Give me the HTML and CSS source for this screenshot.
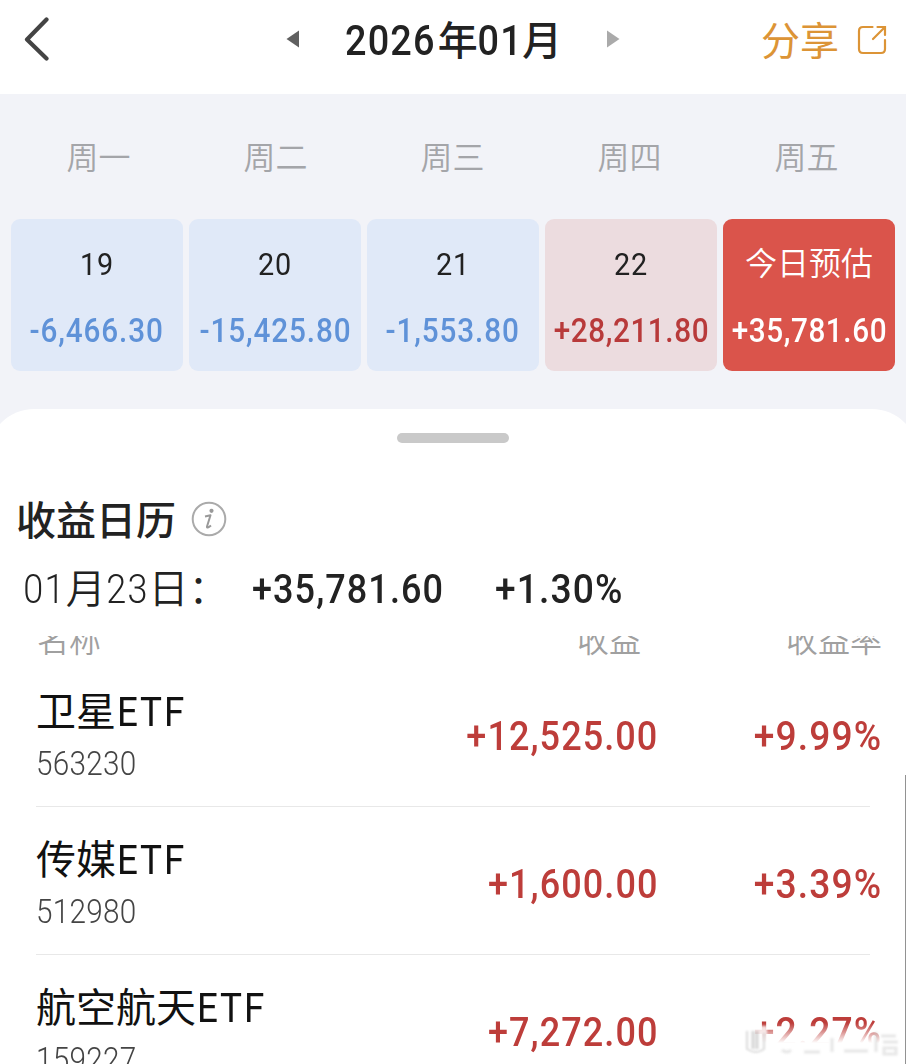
FILE: index.html
```html
<!DOCTYPE html>
<html lang="zh-CN">
<head>
<meta charset="utf-8">
<title>收益日历</title>
<link rel="stylesheet" href="styles.css">
</head>
<body>
<div class="screen">
  <header class="topbar">
    <svg class="back" width="28" height="46" viewBox="0 0 28 46" fill="none" stroke="#444" stroke-width="4.2" stroke-linecap="round" stroke-linejoin="round"><path d="M25.500 2.500 6 22.500 25.500 41.500"/></svg>
    <div class="month">
      <svg width="13" height="18" viewBox="0 0 13 18"><path d="M13 0.500v17L0.500 9z" fill="#606060"/></svg>
      <h1 class="month-title"><span class="num">2026</span>年<span class="num">01</span>月</h1>
      <svg width="13" height="18" viewBox="0 0 13 18"><path d="M0 0.500v17L12.500 9z" fill="#aaa"/></svg>
    </div>
    <div class="share"><span>分享</span>
      <svg width="30" height="30" viewBox="0 0 30 30" fill="none" stroke="#dc9436" stroke-width="2.200" stroke-linecap="round"><path d="M15.500 2H6Q2 2 2 6v18q0 4 4 4h18q4 0 4-4v-9M16 14 27.500 2.500M20.500 2H28v8"/></svg>
    </div>
  </header>

  <section class="calendar">
    <div class="weekdays"><span>周一</span><span>周二</span><span>周三</span><span>周四</span><span>周五</span></div>
    <div class="days">
      <div class="day loss"><span class="date num">19</span><span class="value num">-6,466.30</span></div>
      <div class="day loss"><span class="date num">20</span><span class="value num">-15,425.80</span></div>
      <div class="day loss"><span class="date num">21</span><span class="value num">-1,553.80</span></div>
      <div class="day gain"><span class="date num">22</span><span class="value num">+28,211.80</span></div>
      <div class="day today"><span class="date">今日预估</span><span class="value num">+35,781.60</span></div>
    </div>
  </section>

  <main class="sheet">
    <div class="handle"></div>
    <div class="heading">
      <h2>收益日历</h2>
      <svg width="36" height="36" viewBox="0 0 36 36"><circle cx="18" cy="18" r="16.300" fill="none" stroke="#aaa" stroke-width="2"/><circle cx="20.500" cy="9.800" r="2.100" fill="#999"/><path d="M14 15.500 19.500 14.300 16 25.500Q15.700 28 20 24.500" fill="none" stroke="#999" stroke-width="2" stroke-linejoin="round"/></svg>
    </div>
    <div class="summary">
      <div class="summary-date"><span class="num">01</span>月<span class="num">23</span>日：</div>
      <div class="summary-value num">+35,781.60</div>
      <div class="summary-rate num">+1.30%</div>
    </div>
    <div class="thead"><span>名称</span><span class="col-value">收益</span><span class="col-rate">收益率</span></div>
    <div class="row">
      <div class="fund"><div class="name">卫星<span class="num">ETF</span></div><div class="code num">563230</div></div>
      <div class="amount"><span class="num">+12,525.00</span></div>
      <div class="rate"><span class="num">+9.99%</span></div>
    </div>
    <div class="row">
      <div class="fund"><div class="name">传媒<span class="num">ETF</span></div><div class="code num">512980</div></div>
      <div class="amount"><span class="num">+1,600.00</span></div>
      <div class="rate"><span class="num">+3.39%</span></div>
    </div>
    <div class="row">
      <div class="fund"><div class="name">航空航天<span class="num">ETF</span></div><div class="code num">159227</div></div>
      <div class="amount"><span class="num">+7,272.00</span></div>
      <div class="rate faded"><span class="num">+2.27%</span></div>
    </div>
  </main>
  <div class="scrollbar"></div>
  <svg class="watermark" width="160" height="40" viewBox="0 0 160 40" fill="none" stroke="#c4c4c4" stroke-width="3"><path d="M0 4h23v22q-11 8-23 0z" fill="#fff" stroke="none"/><path d="M3 9v18q9 6 17 0V11" stroke-width="1.500"/><path d="M9 9v18M13 9v18" stroke="#ccc"/><path d="M38 28q5 4 9 0M60 30h16M88 16v14M100 29h24M132 10v20M137 14h15M139 20h15M140 26h12v6h-12z" opacity=".5"/></svg>
</div>
</body>
</html>
```
FILE: styles.css
```css
* { box-sizing: border-box; }
body {
  margin: 0;
  background: #fff;
  color: #222;
  font-family: Roboto, "Noto Sans CJK SC", sans-serif;
}
h1, h2 { margin: 0; font-weight: 500; }
svg { display: block; flex: none; }
.screen { position: relative; width: 906px; height: 1064px; overflow: hidden; }

/* Narrow numerals */
.num {
  display: inline-block;
  transform: scaleX(.9);
  letter-spacing: .03em;
  white-space: nowrap;
}

.topbar { height: 94px; display: flex; align-items: center; justify-content: space-between; padding: 0 19px 14px 21px; }
.back { margin-right: 96px; }
.month { display: flex; align-items: center; gap: 49px; margin-top: -2px; }
.month-title { font-size: 40px; line-height: 60px; white-space: nowrap; margin: 4px -4px 0 -5px; }
.month-title .num { font-size: 42px; margin: 0 -3px; }
.share { display: flex; align-items: center; gap: 18px; color: #dc9436; font-size: 39px; line-height: 60px; }
.share span { margin-top: 4px; }

.calendar { height: 345px; background: #f2f3f8; padding-top: 40px; }
.weekdays { display: grid; grid-template-columns: repeat(5, 1fr); padding: 0 11px 0 10px; text-align: center; font-size: 32px; line-height: 48px; font-weight: 350; color: #a4a5a9; }
.days { display: grid; grid-template-columns: repeat(5, minmax(0, 1fr)); gap: 6px; padding: 0 11px; margin-top: 37px; }
.day { height: 152px; border-radius: 9px; display: flex; flex-direction: column; align-items: center; padding-top: 21px; }
.date { font-size: 32px; line-height: 48px; font-weight: 400; }
.value { font-size: 33px; line-height: 48px; margin-top: 19px; font-weight: 500; }
.loss { background: #e0e9f8; }
.loss .value { color: #5f92d8; }
.gain { background: #ecdcdf; }
.gain .value { color: #b83a3a; }
.gain .value, .today .value { letter-spacing: .02em; }
.today { background: #da544b; color: #fff; }
.today .date { font-weight: 350; }

.sheet { position: relative; margin: -30px -12px 0; padding: 0 12px; height: 700px; background: #fff; border-radius: 46px 46px 0 0; }
.handle { width: 112px; height: 10px; border-radius: 5px; background: #c9c9c9; margin: 0 auto; position: relative; top: 24px; }
.heading { display: flex; align-items: center; gap: 15px; padding: 73px 0 0 16px; }
.heading h2 { font-size: 40px; line-height: 60px; }
.heading svg { margin-top: -6px; }
.summary { display: flex; align-items: center; height: 60px; margin-top: 8px; font-size: 40px; line-height: 60px; }
.summary-date { width: 229px; padding-left: 23px; white-space: nowrap; font-weight: 350; }
.summary-date .num { margin: 0 -2px; font-weight: 300; }
.summary-value { width: 232px; font-weight: 500; transform-origin: left; margin-left: 23px; }
.summary-rate { font-weight: 500; transform: scaleX(.93); transform-origin: left; margin-left: 11px; }
.thead { display: flex; height: 23px; margin-top: 16px; overflow: hidden; padding: 0 24px 0 37px; align-items: flex-end; font-size: 32px; line-height: 44px; font-weight: 350; color: #a0a0a0; }
.thead span { margin-bottom: -4px; }
.thead .col-value { margin-left: auto; margin-right: 145px; }
.row { display: grid; grid-template-columns: 321px 1fr 224px; height: 148px; margin: 0 25px 0 36px; position: relative; }
.row::after { content: ""; position: absolute; left: 0; right: 11px; bottom: 0; height: 1px; background: #e8e8e8; }
.name { font-size: 40px; line-height: 60px; margin-top: 24px; color: #111; white-space: nowrap; }
.name .num { transform-origin: left; transform: scaleX(.92); letter-spacing: .05em; margin-left: 1px; }
.code { font-size: 33px; line-height: 40px; color: #444; font-weight: 300; letter-spacing: .01em; transform-origin: left; margin-top: 1px; }
.amount, .rate { font-size: 40px; line-height: 60px; padding-top: 48px; font-weight: 500; color: #bd3d3a; text-align: right; }
.amount .num, .rate .num { transform-origin: right; margin-right: -1px; }
.rate .num { transform: scaleX(.93); }
.faded { -webkit-mask-image: linear-gradient(#000 68px, transparent 88px); mask-image: linear-gradient(#000 68px, transparent 88px); }
.scrollbar { position: absolute; right: 0; top: 775px; width: 1px; height: 289px; background: #929292; }
.watermark { position: absolute; left: 744px; top: 1022px; filter: blur(1.2px); opacity: .8; }
```
